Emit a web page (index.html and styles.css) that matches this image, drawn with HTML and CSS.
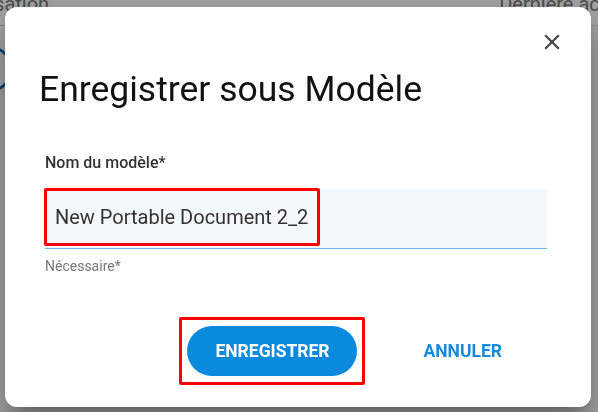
FILE: index.html
```html
<!DOCTYPE html>
<html lang="fr">
<head>
    <meta charset="UTF-8">
    <meta name="viewport" content="width=device-width, initial-scale=1.0">
    <title>Enregistrer sous Modèle</title>
    <link rel="stylesheet" href="styles.css">
</head>
<body>
    <div class="page">
        <div class="table-head">
            <span class="col">Utilisation</span>
            <span class="col col-right">Dernière actualisation</span>
        </div>
        <div class="table-row">
            <span class="avatar"></span>
        </div>
    </div>

    <div class="overlay">
        <div class="dialog">
            <button class="close-btn" aria-label="Fermer">
                <svg width="26" height="26" viewBox="0 0 24 24">
                    <path d="M19 6.41 17.59 5 12 10.59 6.41 5 5 6.41 10.59 12 5 17.59 6.41 19 12 13.41 17.59 19 19 17.59 13.41 12z" fill="#444"/>
                </svg>
            </button>

            <h2 class="title">Enregistrer sous Modèle</h2>

            <div class="form">
                <label class="label" for="name">Nom du modèle*</label>
                <div class="field">
                    <span class="mark value" id="name">New Portable Document 2_2</span>
                </div>
                <div class="helper">Nécessaire*</div>
            </div>

            <div class="actions">
                <span class="mark mark-btn">
                    <button class="btn-primary">Enregistrer</button>
                </span>
                <button class="btn-text">Annuler</button>
            </div>
        </div>
    </div>
</body>
</html>
```

FILE: styles.css
```css
body {
    margin: 0;
    font-family: Roboto, 'Noto Sans', sans-serif;
    background: #fff;
}

.page {
    height: 412px;
    overflow: hidden;
}

.table-head {
    display: flex;
    height: 37px;
    margin: -12px -95px 0 0;
    border-bottom: 1px solid #ddd;
    color: #777;
    font-size: 20px;
    white-space: nowrap;
}

.table-head .col {
    padding-top: 4px;
}

.table-head .col:first-child {
    margin-left: -40px;
}

.table-head .col-right {
    margin-left: auto;
}

.table-row {
    padding: 20px 0 0 0;
}

.avatar {
    display: block;
    width: 40px;
    height: 40px;
    margin-left: -33px;
    border: 3px solid #0a6fb4;
    border-radius: 50%;
}

.overlay {
    position: fixed;
    inset: 0;
    background: rgba(0, 0, 0, 0.35);
    padding: 7px 7px 5px 5px;
}

.dialog {
    position: relative;
    box-sizing: border-box;
    height: 400px;
    background: #fff;
    border-radius: 12px;
    box-shadow: 0 11px 15px -7px rgba(0, 0, 0, 0.25), 0 24px 38px 3px rgba(0, 0, 0, 0.18), 0 9px 46px 8px rgba(0, 0, 0, 0.14);
    padding: 62px 44px 0 40px;
}

.close-btn {
    position: absolute;
    top: 18px;
    right: 22px;
    width: 34px;
    height: 34px;
    padding: 4px;
    border: none;
    background: none;
    cursor: pointer;
}

.title {
    margin: 0 0 0 -6px;
    font-size: 35.5px;
    font-weight: 400;
    line-height: 40px;
    color: #111;
}

.form {
    margin-top: 44px;
}

.label {
    display: block;
    font-size: 16px;
    font-weight: 500;
    color: #333;
    line-height: 20px;
}

.field {
    display: flex;
    height: 60px;
    margin-top: 16px;
    background: #f3f8fc;
    border-bottom: 1px solid #6bb5e3;
    box-sizing: border-box;
}

.mark {
    border: 3px solid #f00;
    border-radius: 2px;
}

.value {
    display: flex;
    align-items: center;
    box-sizing: border-box;
    height: 58px;
    margin: -1px 0 0 -1px;
    padding: 0 9px 0 8px;
    font-size: 20px;
    color: #333;
}

.helper {
    margin-top: 8px;
    font-size: 14px;
    color: #777;
    line-height: 18px;
}

.actions {
    display: flex;
    align-items: center;
    justify-content: flex-end;
    gap: 54px;
    margin-top: 42px;
    padding-right: 41px;
}

.mark-btn {
    display: flex;
    padding: 6px 5px;
}

.btn-primary,
.btn-text {
    font-family: Roboto, 'Noto Sans', sans-serif;
    font-size: 17.5px;
    font-weight: 700;
    text-transform: uppercase;
    border: none;
    cursor: pointer;
}

.btn-primary {
    width: 170px;
    height: 50px;
    border-radius: 25px;
    background: #0a8adc;
    color: #fff;
}

.btn-text {
    padding: 8px 4px;
    background: none;
    color: #1a8ad8;
}
```
